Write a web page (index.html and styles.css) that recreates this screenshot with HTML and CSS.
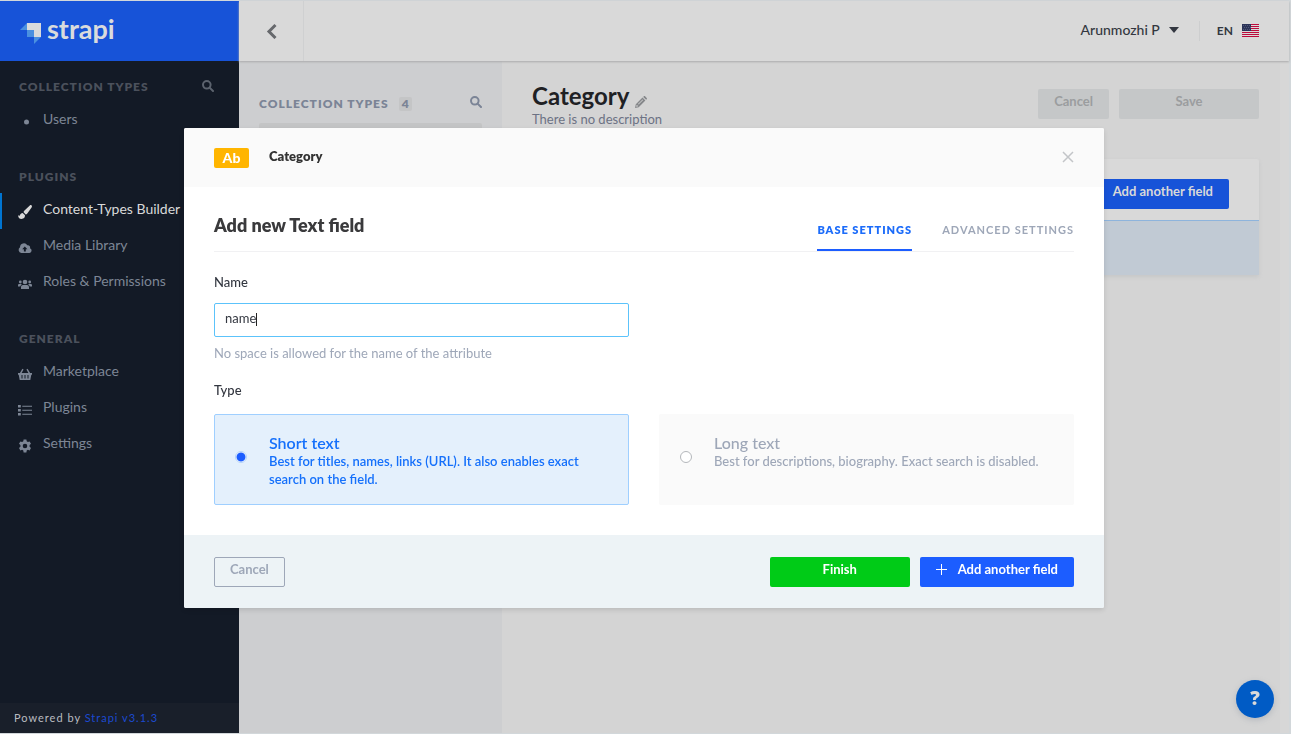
FILE: index.html
```html
<!DOCTYPE html>
<html lang="en">
<head>
<meta charset="utf-8">
<title>Content-Types Builder</title>
<link rel="stylesheet" href="styles.css">
</head>
<body>
<div class="app">
  <aside class="sidebar">
    <a class="brand" href="#">
      <svg class="brand-mark" viewBox="0 0 21 22" width="21" height="22" aria-hidden="true">
        <path d="M7 0H21V14H14V7H7z" fill="#d9dbdc"/>
        <path d="M7 7H14V14H7z" fill="#4a90e0"/>
        <path d="M7 0V7H0z" fill="#4a90e0"/>
        <path d="M14 14H21L14 21z" fill="#4a90e0"/>
      </svg>
      <span>strapi</span>
    </a>
    <nav class="menu">
      <h2 class="menu-title menu-title-first">Collection Types
        <svg class="search" viewBox="0 0 12 12" width="12" height="12" aria-hidden="true"><circle cx="4.8" cy="4.8" r="3.8"/><path d="M7.6 7.6L11 11"/></svg>
      </h2>
      <a class="menu-item" href="#"><svg viewBox="0 0 14 14" width="14" height="14" aria-hidden="true"><circle cx="8.500" cy="7" r="2.500"/></svg>Users</a>
      <h2 class="menu-title">Plugins</h2>
      <a class="menu-item active" href="#"><svg viewBox="0 0 14 14" width="14" height="14" aria-hidden="true"><path d="M13.600.4c.6.600.4 1.300 0 2L9.300 8.600c-.5.600-1 .8-1.600.8L5.600 7.300c0-.7.300-1.200.9-1.700L11.800.5c.6-.5 1.300-.6 1.800-.1z"/><path d="M4.700 8L7 10.300c.1 2.200-1.300 3.600-3.400 3.600C1.200 13.900.2 12.300.1 10.200c.6.500 1.200.7 1.700.2C2.300 9 3.300 8.100 4.700 8z"/></svg>Content-Types Builder</a>
      <a class="menu-item" href="#"><svg viewBox="0 0 14 14" width="14" height="14" aria-hidden="true"><path fill-rule="evenodd" d="M3.300 12A3.200 3.200 0 0 1 2 6.200 3.900 3.900 0 0 1 9.300 4.300a2.200 2.200 0 0 1 2.700 2.900A2.500 2.500 0 0 1 11.500 12zM5.900 10.500h1.900V8.200h1.600L6.800 5.400 4.200 8.200h1.700z"/></svg>Media Library</a>
      <a class="menu-item" href="#"><svg viewBox="0 0 14 14" width="14" height="14" aria-hidden="true"><circle cx="7" cy="5" r="2.300"/><circle cx="2.300" cy="5" r="1.400"/><circle cx="11.700" cy="5" r="1.400"/><path d="M3 12v-1.700C3 8.700 3.900 8 5 8h4c1.100 0 2 .7 2 2.300V12zM0 9.500V8.400C0 7.400.6 7 1.300 7h1.900l.6.400C2.800 7.900 2.400 8.600 2.300 9.500zM14 9.500V8.400c0-1-.6-1.400-1.300-1.400h-1.900l-.6.400c1 .5 1.400 1.200 1.500 2.100z"/></svg>Roles &amp; Permissions</a>
      <h2 class="menu-title">General</h2>
      <a class="menu-item" href="#"><svg viewBox="0 0 14 14" width="14" height="14" aria-hidden="true"><path fill-rule="evenodd" d="M0 6h1.900l2.500-4.200 1.200.7L3.600 6h6.800L8.400 2.500l1.200-.7L12.100 6H14v1.700h-.7L12.300 13H1.700L.7 7.700H0zM3.500 8v3.500h1V8zM6.500 8v3.500h1V8zM9.500 8v3.500h1V8z"/></svg>Marketplace</a>
      <a class="menu-item" href="#"><svg viewBox="0 0 14 14" width="14" height="14" aria-hidden="true"><path d="M0 2h2.800v2.400H0zM0 6h2.800v2.400H0zM0 10h2.800v2.400H0zM4.300 2.700H14v1H4.300zM4.300 6.700H14v1H4.300zM4.300 10.700H14v1H4.300z"/></svg>Plugins</a>
      <a class="menu-item" href="#"><svg viewBox="0 0 14 14" width="14" height="14" aria-hidden="true"><path fill-rule="evenodd" d="M5.600.5h2.800l.3 1.800 1.200.7 1.700-.6 1.400 2.400-1.400 1.200v1.800l1.400 1.200-1.400 2.400-1.700-.6-1.200.7-.3 1.900H5.600l-.3-1.900-1.200-.7-1.700.6L1 9l1.400-1.200V6L1 4.800l1.400-2.400 1.700.6 1.200-.7zM7 4.700a2.300 2.300 0 1 0 0 4.600 2.300 2.300 0 0 0 0-4.600z"/></svg>Settings</a>
    </nav>
    <p class="powered">Powered by <a href="#">Strapi v3.1.3</a></p>
  </aside>

  <div class="page">
    <header class="topbar">
      <button class="back" type="button" aria-label="Back"><svg viewBox="0 0 12 16" width="12" height="16" aria-hidden="true"><path d="M10.500 2L4 8.500l6.500 6.500"/></svg></button>
      <button class="user" type="button">Arunmozhi P <span class="caret-down"></span></button>
      <button class="locale" type="button">EN
        <svg viewBox="0 0 17 13" width="17" height="13" aria-hidden="true"><path fill="#d9d9d9" d="M0 0h17v13H0z"/><path fill="#bd0a3c" d="M0 0h17v1H0zM0 2h17v1H0zM0 4h17v1H0zM0 6h17v1H0zM0 8h17v1H0zM0 10h17v1H0zM0 12h17v1H0z"/><path fill="#2b3358" d="M0 0h9v7H0z"/><path d="M1 1.500h8M2 3.500h7M1 5.500h8" fill="none" stroke="#50587a" stroke-dasharray="1 1"/></svg>
      </button>
    </header>
    <div class="columns">
      <section class="types">
        <h2 class="types-title">Collection Types <span class="count">4</span>
          <svg class="search" viewBox="0 0 12 12" width="12" height="12" aria-hidden="true"><circle cx="4.800" cy="4.800" r="3.800"/><path d="M7.600 7.600L11 11"/></svg>
        </h2>
        <div class="types-item"></div>
      </section>
      <main class="main">
        <div class="main-head">
          <div>
            <h1>Category <svg viewBox="0 0 12 12" width="12" height="12" aria-hidden="true"><path fill-rule="evenodd" d="M0 12l.8-3.700L7.500 1.600l2.900 2.900-6.700 6.700zM8.200.9l.6-.6c.4-.4.9-.4 1.300 0l1.600 1.600c.4.400.4.900 0 1.300l-.6.600zM1.700 8.700l-.5 2.100 2.100-.5zM3 8l.5.500 4.600-4.600-.5-.5z"/></svg></h1>
            <p>There is no description</p>
          </div>
          <div class="main-actions">
            <button class="btn btn-off" type="button" disabled>Cancel</button>
            <button class="btn btn-off btn-wide" type="button" disabled>Save</button>
          </div>
        </div>
        <div class="fields">
          <div class="fields-head"><button class="btn btn-dim" type="button">Add another field</button></div>
          <div class="fields-row"></div>
        </div>
      </main>
    </div>
  </div>
</div>

<button class="help" type="button" aria-label="Help">?</button>

<div class="overlay">
  <form class="modal" role="dialog" aria-label="Add new Text field">
    <header class="modal-head">
      <span class="badge">Ab</span>
      <span class="modal-name">Category</span>
      <button class="close" type="button" aria-label="Close"><svg viewBox="0 0 10 10" width="10" height="10" aria-hidden="true"><path d="M0 0L10 10M10 0L0 10"/></svg></button>
    </header>
    <div class="modal-body">
      <div class="modal-title">
        <h2>Add new Text field</h2>
        <nav class="tabs"><a class="on" href="#">Base settings</a><a href="#">Advanced settings</a></nav>
      </div>
      <div class="grid">
        <div class="field">
          <label for="name">Name</label>
          <div class="text-box">
            <input id="name" type="text" value="name">
            <span class="cursor"></span>
          </div>
          <p>No space is allowed for the name of the attribute</p>
        </div>
      </div>
      <fieldset class="kinds">
        <legend>Type</legend>
        <div class="grid">
          <label class="kind kind-on"><input type="radio" name="kind" checked><span><strong>Short text</strong>Best for titles, names, links (URL). It also enables exact search on the field.</span></label>
          <label class="kind"><input type="radio" name="kind"><span><strong>Long text</strong>Best for descriptions, biography. Exact search is disabled.</span></label>
        </div>
      </fieldset>
    </div>
    <footer class="modal-foot">
      <button class="btn btn-line" type="button">Cancel</button>
      <button class="btn btn-green" type="submit">Finish</button>
      <button class="btn btn-blue" type="button"><svg viewBox="0 0 11 11" width="11" height="11" aria-hidden="true"><path d="M5.500 0V11M0 5.500H11"/></svg>Add another field</button>
    </footer>
  </form>
</div>
</body>
</html>
```
FILE: styles.css
```css
* { box-sizing: border-box; }

body {
  margin: 0;
  padding: 1px 2px 1px 0;
  background: #d2d7da;
  color: #333740;
  font: 400 13px/18px Lato, "Open Sans", sans-serif;
}

h1, h2, p, fieldset { margin: 0; }
a { color: inherit; text-decoration: none; }
button, input { font: inherit; color: inherit; }
button { border: 0; padding: 0; background: none; }

.app {
  display: flex;
  min-height: calc(100vh - 2px);
}

/* Sidebar */
.sidebar {
  display: flex;
  flex: none;
  flex-direction: column;
  width: 239px;
  background: #131a26;
  color: #7d8695;
}
.brand {
  display: flex;
  align-items: center;
  gap: 6px;
  height: 60px;
  padding: 0 20px 4px;
  background: #1753d8;
  color: #d9dbdc;
  font-size: 27px;
  font-weight: 700;
  line-height: 30px;
}
.brand-mark { margin: 10px 0 0; }
.menu { flex: 1; }
.menu-title {
  display: flex;
  align-items: center;
  justify-content: space-between;
  padding: 29px 25px 7px 19px;
  color: #4b515c;
  font-size: 12px;
  font-weight: 800;
  line-height: 18px;
  letter-spacing: 1px;
  text-transform: uppercase;
}
.menu-title-first { padding-top: 17px; }
.search {
  fill: none;
  stroke: currentColor;
  stroke-width: 2;
  stroke-linecap: round;
}
.menu-title .search { margin-bottom: 3px; color: #5c636e; }
.menu-item {
  display: flex;
  align-items: center;
  gap: 11px;
  height: 36px;
  padding: 0 0 5px 16px;
  border-left: 2px solid transparent;
  font-size: 14px;
  white-space: nowrap;
}
.menu-item svg { fill: #7d8695; margin-top: 6px; }
.menu-item.active { border-color: #0074d0; color: #d9d9d9; }
.menu-item.active svg { fill: #d9d9d9; }
.powered {
  padding: 6px 14px;
  background: #191f2a;
  color: #b9bcc0;
  font-size: 11px;
  letter-spacing: 1px;
}
.powered a { color: #1c4ad0; }

/* Page behind the dialog */
.page {
  display: flex;
  flex: 1;
  flex-direction: column;
  min-width: 0;
}
.topbar {
  display: flex;
  align-items: center;
  height: 60px;
  padding-right: 30px;
  background: #d9d9d9;
  box-shadow: 0 1px 2px #aaabac;
  z-index: 1;
}
.back {
  display: grid;
  place-items: center;
  width: 65px;
  height: 60px;
  border-right: 1px solid #cfd0d1;
}
.back path { fill: none; stroke: #66686c; stroke-width: 3; }
.user {
  display: flex;
  align-items: center;
  gap: 9px;
  margin-left: auto;
  padding: 0 20px 2px 0;
  font-size: 14px;
  font-weight: 500;
}
.caret-down { border: 5px solid transparent; border-top: 6px solid #333740; border-bottom: 0; }
.locale {
  display: flex;
  align-items: center;
  gap: 9px;
  height: 20px;
  padding-left: 17px;
  border-left: 1px solid #cdcecf;
  font-size: 12px;
  font-weight: 700;
}
.locale svg { margin-bottom: 1px; }
.columns {
  display: flex;
  flex: 1;
  padding-right: 9px;
  background: #d7d7d7;
}
.types {
  flex: none;
  width: 263px;
  padding: 34px 20px 0;
  background: #cdced0;
}
.types-title {
  display: flex;
  align-items: center;
  gap: 10px;
  color: #7b8496;
  font-size: 12px;
  font-weight: 800;
  line-height: 18px;
  letter-spacing: 1px;
  text-transform: uppercase;
}
.types-title .search { margin: 0 0 4px auto; }
.count {
  padding: 0 3px;
  border-radius: 2px;
  background: #c4c5c6;
  line-height: 14px;
  letter-spacing: 0;
}
.types-item {
  height: 34px;
  margin-top: 10px;
  border-radius: 2px;
  background: #c3c4c5;
}
.main {
  flex: 1;
  padding: 20px 21px 0 30px;
  background: #d4d4d4;
}
.main-head {
  display: flex;
  align-items: start;
  justify-content: space-between;
}
.main-head h1 {
  color: #1f2124;
  font-size: 24px;
  font-weight: 700;
  line-height: 30px;
}
.main-head h1 svg { fill: #85878a; vertical-align: -3px; }
.main-head p { color: #6c7284; line-height: 16px; }
.main-actions { display: flex; gap: 10px; padding-top: 8px; }
.btn {
  height: 30px;
  padding: 0 15px 6px;
  border: 1px solid transparent;
  border-radius: 2px;
  font-weight: 700;
  line-height: 18px;
}
.btn-wide { width: 140px; }
.btn-off { background: #c5c7c8; color: #9b9d9f; }
.btn-dim { background: #1753d8; color: #d9d9d9; padding-left: 37px; }
.fields {
  margin-top: 32px;
  border-radius: 2px;
  background: #d9d9d9;
  box-shadow: 0 2px 4px #c6c7c8;
}
.fields-head {
  display: flex;
  justify-content: flex-end;
  padding: 20px 30px 11px;
}
.fields-row { height: 55px; border-top: 1px solid #8eb4dc; background: #c1cad4; }
.help {
  position: fixed;
  right: 17px;
  bottom: 16px;
  width: 38px;
  height: 38px;
  padding-bottom: 3px;
  border-radius: 50%;
  background: #005bc5;
  color: #d9d9d9;
  box-shadow: 0 2px 6px #b4b8be;
  font-family: "Open Sans", sans-serif;
  font-size: 19px;
  font-weight: 800;
}

/* Dialog */
.overlay {
  position: fixed;
  inset: 0;
  z-index: 2;
  display: flex;
  align-items: flex-start;
  justify-content: center;
  padding: 128px 3px 0 0;
}
.modal {
  width: 100%;
  max-width: 920px;
  border-radius: 2px;
  background: #fff;
  box-shadow: 0 2px 5px #0000001f;
  overflow: hidden;
}
.modal-head {
  display: flex;
  align-items: center;
  gap: 20px;
  height: 59px;
  padding: 0 31px 0 30px;
  background: #fafafa;
}
.badge {
  width: 35px;
  border-radius: 2px;
  background: #ffb500;
  color: #fff;
  font-size: 14px;
  font-weight: 900;
  line-height: 20px;
  text-align: center;
}
.modal-name { padding-bottom: 3px; font-weight: 800; color: #333; }
.close { display: flex; margin-left: auto; padding-bottom: 2px; }
.close svg { overflow: visible; }
.close path { stroke: #c3c5c8; stroke-width: 1.5; }
.modal-body { padding: 24px 30px 30px; }
.modal-title {
  display: flex;
  justify-content: space-between;
  height: 41px;
  border-bottom: 1px solid #f1f1f3;
}
.modal-title h2 {
  color: #3a3a3c;
  font-size: 18px;
  font-weight: 800;
  line-height: 28px;
}
.tabs { display: flex; gap: 30px; }
.tabs a {
  height: 40px;
  padding-top: 10px;
  color: #9ea7b8;
  font-size: 11px;
  font-weight: 700;
  letter-spacing: 1px;
  text-transform: uppercase;
}
.tabs .on { border-bottom: 2px solid #1c5dff; color: #1c6cfa; font-weight: 800; }
.grid {
  display: grid;
  grid-template-columns: 1fr 1fr;
  gap: 30px;
}
.field { padding-top: 21px; }
.field label, .kinds legend { display: block; font-weight: 500; }
.text-box { position: relative; margin: 12px 0 7px; }
.text-box input {
  display: block;
  width: 100%;
  height: 34px;
  padding: 0 10px 4px;
  border: 1px solid #5cc3fb;
  border-radius: 2px;
  outline: 0;
  background: #fff;
}
.cursor {
  position: absolute;
  top: 10px;
  left: 42px;
  width: 1px;
  height: 13px;
  background: #222;
}
.field p { color: #9ea7b8; }
.kinds { min-width: 0; margin-top: 19px; padding: 0; border: 0; }
.kinds legend { margin-bottom: 15px; padding: 0; }
.kind {
  display: flex;
  gap: 22px;
  height: 91px;
  padding: 19px 30px 0 20px;
  border: 1px solid #fafafa;
  border-radius: 2px;
  background: #fafafa;
  color: #9ea7b8;
  font-weight: 500;
}
.kind strong { display: block; font-size: 16px; font-weight: 500; line-height: 18px; }
.kind-on { border-color: #9fcfff; background: #e4f0fc; color: #1570fb; }
.kind-on span, .kind-on strong { font-weight: 600; }
.kind input {
  flex: none;
  appearance: none;
  width: 12px;
  height: 12px;
  margin: 17px 0 0;
  border: 1px solid #b4b7bb;
  border-radius: 50%;
  background: #fff;
}
.kind input:checked {
  border-color: #b5d4f8;
  background: radial-gradient(circle, #1c5dff 0 4px, #fff 5px);
}
.modal-foot {
  display: flex;
  gap: 10px;
  padding: 22px 30px 21px;
  background: #edf3f6;
}
.btn-line { margin-right: auto; border-color: #9ea7b8; color: #9ea7b8; }
.btn-green { width: 140px; background: #00cb17; color: #fff; }
.btn-blue { display: flex; align-items: center; gap: 11px; background: #1c5dff; color: #fff; }
.btn-blue path { stroke: #fff; }
```
